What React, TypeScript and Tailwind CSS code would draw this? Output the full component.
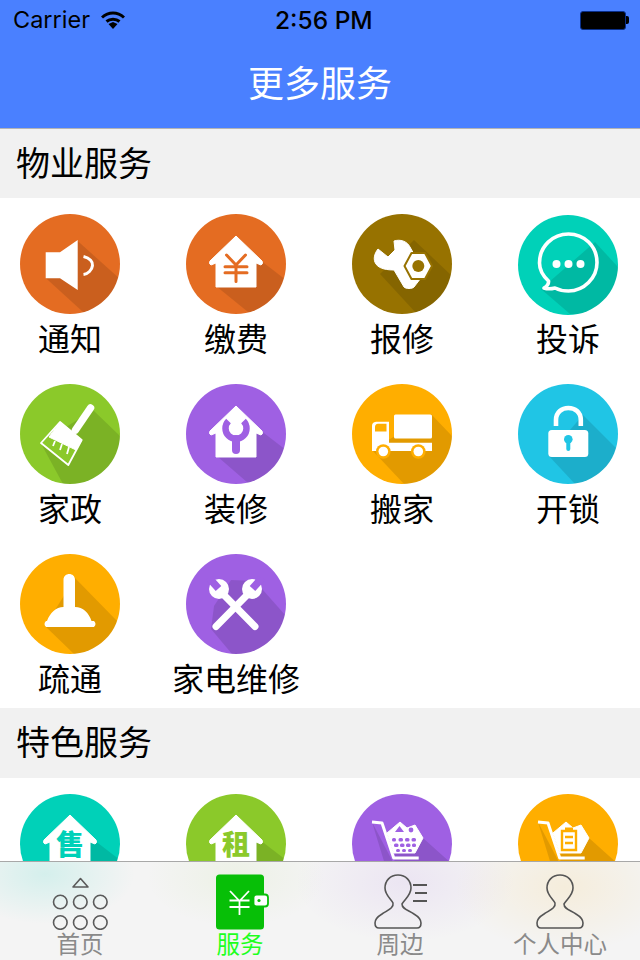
import { ReactNode } from 'react';

const orange = '#e46c22';
const brown = '#977200';
const teal = '#00d1b8';
const green = '#8bc92a';
const purple = '#9f60e3';
const amber = '#ffae00';
const cyan = '#20c5e5';

function Badge({ id, color, shadow, children, className = '' }: { id: string; color: string; shadow: string; children: ReactNode; className?: string }) {
    return (
        <svg viewBox="0 0 100 100" className={`block h-[100px] w-[100px] shrink-0 ${className}`}>
            <defs>
                <clipPath id={id}>
                    <circle cx="50" cy="50" r="50" />
                </clipPath>
            </defs>
            <circle cx="50" cy="50" r="50" fill={color} />
            <polygon points={shadow} fill="#000" fillOpacity="0.115" clipPath={`url(#${id})`} />
            {children}
        </svg>
    );
}

function House({ y = 0 }: { y?: number }) {
    return (
        <path
            transform={`translate(0 ${y})`}
            d="M50 22 L76 47 Q77.5 50 75 51 L70 49 L70 73 L30 73 L30 49 L25 51 Q22.5 50 24 47 Z"
            fill="#fff"
            stroke="#fff"
            strokeWidth="1"
            strokeLinejoin="round"
        />
    );
}

const items = [
    {
        label: '通知',
        icon: (
            <Badge id="b1" color={orange} shadow="57.7,27 100,65 100,100 63,98 25.7,64">
                <polygon points="25.7,38.3 40,38.3 57.7,26 57.7,76 40,64.3 25.7,64.3" fill="#fff" />
                <path d="M63.5 42.5 C70 44 73 48 72.5 51.5 C72 56 68 60 63.5 60.5" fill="none" stroke="#fff" strokeWidth="3" />
            </Badge>
        ),
    },
    {
        label: '缴费',
        icon: (
            <Badge id="b2" color={orange} shadow="74,46 100,66 100,100 62,98 30,72">
                <House />
                <g fill="none" stroke={orange} strokeWidth="3" strokeLinecap="round" strokeLinejoin="round">
                    <path d="M40.5 41 L50 51 L59.5 41" />
                    <path d="M39 52.7 H61 M39 58.7 H61 M50 51 V67.5" />
                </g>
            </Badge>
        ),
    },
    {
        label: '报修',
        icon: (
            <Badge id="b3" color={brown} shadow="62,26 100,62 100,100 64,99 28,60">
                <path
                    d="M42 27 C48 25 55 27 58 33 L63 42 L72 60 L62 73 C60 75 54 75 52 73 L42 56 C36 56 27 55 24 50 C21 46 22 40 26 35 L36 43 L43 36 Z"
                    fill="#fff"
                    stroke="#fff"
                    strokeWidth="1"
                    strokeLinejoin="round"
                />
                <polygon points="59.5,39 73,39 80,52 73,65 59.5,65 52.5,52" fill="#fff" stroke={brown} strokeWidth="2" strokeLinejoin="round" />
                <circle cx="66.3" cy="52" r="6" fill={brown} />
            </Badge>
        ),
    },
    {
        label: '投诉',
        icon: (
            <Badge id="b4" color={teal} shadow="77,27 100,52 100,100 52,99 23,74" className="translate-y-px">
                <path
                    d="M26 73 Q31 70 30.5 66 C24 60 21.5 54 21.5 48 C21.5 31 35 19 50.5 19 C66 19 79 31 79 47.5 C79 63 66 76 50.5 76 C45 76 41 75 37 73 C33 74 29 74 26 73 Z"
                    fill="none"
                    stroke="#fff"
                    strokeWidth="3.6"
                    strokeLinejoin="round"
                />
                <circle cx="38.5" cy="49" r="4" fill="#fff" />
                <circle cx="50.5" cy="49" r="4" fill="#fff" />
                <circle cx="62.5" cy="49" r="4" fill="#fff" />
            </Badge>
        ),
    },
    {
        label: '家政',
        icon: (
            <Badge id="b5" color={green} shadow="73,26 100,52 100,100 43,100 20.7,59">
                <path d="M70.5 24 L55.5 46" stroke="#fff" strokeWidth="7.5" strokeLinecap="round" />
                <polygon points="40,38 61.7,56 48.3,81 21,59" fill={green} stroke="#fff" strokeWidth="1.8" strokeLinejoin="round" />
                <polygon points="40,38 61.7,56 56,66 29,53" fill="#fff" stroke="#fff" strokeWidth="1" strokeLinejoin="round" />
                <path d="M35 57 L33 62 M42 60 L40 66 M49 63 L47 70" stroke="#fff" strokeWidth="1.8" fill="none" />
            </Badge>
        ),
    },
    {
        label: '装修',
        icon: (
            <Badge id="b6" color={purple} shadow="74,46 100,66 100,100 62,99 32,73">
                <House />
                <path d="M42.5 37 A10.5 10.5 0 1 0 57.5 37" fill="none" stroke={purple} strokeWidth="6.5" />
                <path d="M50 55 V66" stroke={purple} strokeWidth="8" strokeLinecap="round" />
            </Badge>
        ),
    },
    {
        label: '搬家',
        icon: (
            <Badge id="b7" color={amber} shadow="79,30 100,52 100,100 52,100 20,66">
                <rect x="42" y="30.5" width="38" height="24" rx="1.5" fill="#fff" />
                <path d="M24 37.7 H37 V58.7 H80 V67 H20 V42 Q20 38 24 37.7 Z" fill="#fff" />
                <path d="M26 39.7 H34.5 V47.5 H23 V43 Q23 40 26 39.7 Z" fill={amber} />
                <circle cx="31.3" cy="67.5" r="7.3" fill={amber} />
                <circle cx="31.3" cy="67.5" r="4.8" fill="#fff" />
                <circle cx="66.3" cy="67.5" r="7.3" fill={amber} />
                <circle cx="66.3" cy="67.5" r="4.8" fill="#fff" />
            </Badge>
        ),
    },
    {
        label: '开锁',
        icon: (
            <Badge id="b8" color={cyan} shadow="65,31 100,66 100,100 57,100 30,71">
                <path d="M38 42 V36 C38 28 44 24 50.3 24 C57 24 62.8 28 62.8 36 V42" fill="none" stroke="#fff" strokeWidth="4.6" />
                <rect x="30.3" y="46" width="40" height="27" rx="3.5" fill="#fff" />
                <circle cx="50.3" cy="55.3" r="4.3" fill={cyan} />
                <path d="M50.3 56 V65" stroke={cyan} strokeWidth="4" strokeLinecap="round" />
            </Badge>
        ),
    },
    {
        label: '疏通',
        icon: (
            <Badge id="b9" color={amber} shadow="55,24 100,70 100,100 54,100 25,72">
                <path d="M43.5 53 V26 C43.5 18 55 18 55 26 V53 C63 53 69 59 71.5 67 L74 67 Q77 70 74 73 L26 73 Q23 70 26 67 L27 67 C30 59 36 53 43.5 53 Z" fill="#fff" />
            </Badge>
        ),
    },
    {
        label: '家电维修',
        icon: (
            <Badge id="b10" color={purple} shadow="28,52 45,26 69,27 100,62 100,100 46,100 25,75">
                <path d="M30 72.5 L62 40" stroke="#fff" strokeWidth="7" strokeLinecap="round" />
                <path d="M69 72.5 L37 40" stroke="#fff" strokeWidth="7" strokeLinecap="round" />
                <circle cx="66" cy="35" r="10" fill="#fff" />
                <circle cx="33" cy="35" r="10" fill="#fff" />
                <path d="M66.5 34.5 L76 24" stroke={purple} strokeWidth="7.5" />
                <path d="M32.5 34.5 L23 24" stroke={purple} strokeWidth="7.5" />
            </Badge>
        ),
    },
];

const special = [
    {
        id: 's1',
        color: teal,
        shadow: '74,46 100,66 100,100 62,98 30,72',
        glyph: '售',
    },
    {
        id: 's2',
        color: green,
        shadow: '74,46 100,66 100,100 62,98 30,72',
        glyph: '租',
    },
];

function SectionTitle({ title, line }: { title: string; line?: boolean }) {
    return (
        <div className={`flex h-[70px] items-center bg-[#f1f1f1] pb-[5px] pl-[16px] text-[34px] text-black ${line ? 'border-t border-[#b4b4b4]' : ''}`}>
            {title}
        </div>
    );
}

function Person({ lines }: { lines?: boolean }) {
    return (
        <svg viewBox="0 0 56 56" className="h-[56px] w-[56px]" fill="none" stroke="#555" strokeWidth="1.6">
            <path d="M24 1 C16 1 11 7 11 14 C11 21 17 25 19 29 C20 34 14 36 8 40 C3 43 1 45 1 49 C1 52 2 54 5 54 L43 54 C46 54 47 52 47 49 C47 45 45 43 40 40 C34 36 28 35 28 30 C31 25 37 21 37 14 C37 7 32 1 24 1 Z" />
            {lines && <path d="M39 11 H53 M41 19 H53 M39 27 H53" strokeWidth="1.8" />}
        </svg>
    );
}

function Tab({ label, active, children }: { label: string; active?: boolean; children: ReactNode }) {
    return (
        <div className="flex w-[160px] flex-col items-center">
            <div className="flex h-[58px] w-full items-end justify-center">{children}</div>
            <div className={`text-[23.5px] leading-[26px] ${active ? 'text-[#1eff1e]' : 'text-[#8a8a8a]'}`}>{label}</div>
        </div>
    );
}

export default function App() {
    return (
        <div className="flex h-[960px] w-[640px] flex-col overflow-hidden bg-white font-['Noto_Sans_CJK_SC',sans-serif]">
            <div className="h-[861px] shrink-0 overflow-hidden">
                <div className="h-[128px] bg-[#4a80ff]">
                    <div className="relative flex h-[40px] items-center justify-between pl-[13px] pr-[11px] font-['Inter',sans-serif] text-black">
                        <div className="flex items-center gap-[11px] text-[23.5px]">
                            <span>Carrier</span>
                            <svg viewBox="0 0 24 18" className="h-[18px] w-[24px]">
                                <path d="M1 6.5 C7.5 0.5 16.5 0.5 23 6.5" fill="none" stroke="#000" strokeWidth="3" />
                                <path d="M5.5 10.5 C9 7.5 15 7.5 18.5 10.5" fill="none" stroke="#000" strokeWidth="3" />
                                <polygon points="7.5,13 12,11 16.5,13 12,18" fill="#000" />
                            </svg>
                        </div>
                        <span className="absolute left-[275px] text-[24.5px] font-medium">2:56 PM</span>
                        <div className="flex items-center">
                            <div className="h-[19px] w-[46px] rounded-[3px] border border-[#0a2f8a] bg-black" />
                            <div className="h-[8px] w-[3px] rounded-r-[2px] bg-black" />
                        </div>
                    </div>
                    <div className="flex h-[88px] items-center justify-center pb-[6px] text-[36px] text-white">更多服务</div>
                </div>

                <SectionTitle title="物业服务" line />
                <div className="grid h-[510px] grid-cols-[repeat(4,100px)] grid-rows-[repeat(3,170px)] gap-x-[66px] pl-[20px] pt-[16px]">
                    {items.map((item) => (
                        <div key={item.label} className="flex h-[170px] w-[100px] flex-col items-center">
                            {item.icon}
                            <div className="whitespace-nowrap text-[32px] leading-[46px] text-black">{item.label}</div>
                        </div>
                    ))}
                </div>

                <SectionTitle title="特色服务" />
                <div className="flex gap-x-[66px] pl-[20px] pt-[16px]">
                    {special.map((s) => (
                        <Badge key={s.id} id={s.id} color={s.color} shadow={s.shadow}>
                            <House y={-1} />
                            <text x="50" y="61" textAnchor="middle" fontSize="28" fontWeight="900" fill={s.color}>
                                {s.glyph}
                            </text>
                        </Badge>
                    ))}
                    <Badge id="s3" color={purple} shadow="20,28 42,70 46,30 71,44 100,70 100,100 42,100">
                        <path d="M20 28 L30 29 L41.7 64 L66.7 64" fill="none" stroke="#fff" strokeWidth="3" strokeLinejoin="round" />
                        <polygon points="35,39 48,28 55,34 63,31 71,44 63,59 41.7,59" fill="#fff" stroke="#fff" strokeLinejoin="round" />
                        <polygon points="47.5,32 52,38 43,38" fill={purple} />
                        <circle cx="59" cy="36" r="2.4" fill={purple} />
                        <g fill={purple}>
                            <rect x="40" y="44" width="4" height="3.5" rx="1.5" />
                            <rect x="46.5" y="44" width="4.5" height="3.5" rx="1.5" />
                            <rect x="53" y="44" width="4.5" height="3.5" rx="1.5" />
                            <rect x="59.5" y="44" width="4.5" height="3.5" rx="1.5" />
                            <rect x="42" y="49.5" width="4.5" height="3.5" rx="1.5" />
                            <rect x="48" y="49.5" width="4.5" height="3.5" rx="1.5" />
                            <rect x="54" y="49.5" width="4.5" height="3.5" rx="1.5" />
                            <rect x="60" y="49.5" width="4" height="3.5" rx="1.5" />
                            <rect x="44" y="55" width="4" height="3" rx="1.5" />
                            <rect x="50" y="55" width="4" height="3" rx="1.5" />
                            <rect x="56" y="55" width="4" height="3" rx="1.5" />
                        </g>
                    </Badge>
                    <Badge id="s4" color={amber} shadow="20,28 42,70 46,30 71,44 100,70 100,100 42,100">
                        <path d="M20 28 L30 29 L41.7 64 L66.7 64" fill="none" stroke="#fff" strokeWidth="3" strokeLinejoin="round" />
                        <polygon points="35,39 48,28 55,34 63,31 71,44 63,59 41.7,59" fill="#fff" stroke="#fff" strokeLinejoin="round" />
                        <path d="M44 37 H58 V56 H44 Z M47 43 H55 M47 49 H55" fill="none" stroke={amber} strokeWidth="2.4" />
                        <rect x="47" y="33.5" width="8" height="4" fill={amber} />
                    </Badge>
                </div>
            </div>

            {/* tinte del desenfoque de fondo, hecho con gradientes */}
            <div className="flex h-[99px] w-[640px] shrink-0 border-t border-[#a8a8a8] bg-[#f4f4f4] bg-[radial-gradient(ellipse_90px_50px_at_45px_12px,rgba(0,209,184,0.13),transparent),radial-gradient(ellipse_90px_50px_at_236px_15px,rgba(139,201,42,0.07),transparent),radial-gradient(ellipse_110px_60px_at_405px_20px,rgba(159,96,227,0.1),transparent),radial-gradient(ellipse_110px_65px_at_565px_25px,rgba(255,174,0,0.1),transparent)] pt-[10px]">
                <Tab label="首页">
                    <svg viewBox="0 0 56 56" className="h-[56px] w-[56px]" fill="none" stroke="#5a5a5a" strokeWidth="1.6">
                        <path d="M21 13 L28.5 4.5 L36 13 Z" strokeLinejoin="round" />
                        <circle cx="8.3" cy="28" r="6.8" />
                        <circle cx="28.3" cy="28" r="6.8" />
                        <circle cx="48.3" cy="28" r="6.8" />
                        <circle cx="8.3" cy="48.5" r="6.8" />
                        <circle cx="28.3" cy="48.5" r="6.8" />
                        <circle cx="48.3" cy="48.5" r="6.8" />
                    </svg>
                </Tab>
                <Tab label="服务" active>
                    <svg viewBox="0 0 54 56" className="ml-[6px] h-[56px] w-[54px]">
                        <rect x="0" y="0.5" width="48" height="55" rx="3.5" fill="#07bf07" />
                        <rect x="37.5" y="20.5" width="14.5" height="12" rx="3" fill="#fff" stroke="#07bf07" strokeWidth="1.8" />
                        <circle cx="43" cy="26.5" r="1.6" fill="#07bf07" />
                        <path d="M14 17 L23.5 27 L33 17 M13.5 26.5 H33.5 M13.5 33 H33.5 M23.5 27 V41" fill="none" stroke="#fff" strokeWidth="1.8" />
                    </svg>
                </Tab>
                <Tab label="周边">
                    <div className="pl-[3px]">
                        <Person lines />
                    </div>
                </Tab>
                <Tab label="个人中心">
                    <div className="pl-[8px]">
                        <Person />
                    </div>
                </Tab>
            </div>
        </div>
    );
}
